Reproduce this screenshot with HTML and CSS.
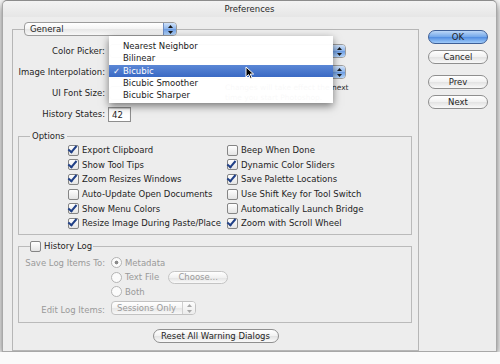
FILE: index.html
```html
<!DOCTYPE html>
<html lang="en">
<head>
    <meta charset="UTF-8">
    <meta name="viewport" content="width=device-width, initial-scale=1.0">
    <title>Preferences</title>
    <link rel="stylesheet" href="styles.css">
</head>
<body>
    <div class="window">
        <div class="titlebar">Preferences</div>
        <div class="main">
            <fieldset class="panel">
                <legend>
                    <span class="popup general">General<span class="stepper"><svg width="5" height="9" viewBox="0 0 5 9"><polygon points="2.5,0 5,3 0,3"/><polygon points="0,6 5,6 2.5,9"/></svg></span></span>
                </legend>

                <div class="prefs">
                    <div class="row">
                        <span class="lbl">Color Picker:</span>
                        <span class="popup wide"><span class="stepper"><svg width="5" height="9" viewBox="0 0 5 9"><polygon points="2.5,0 5,3 0,3"/><polygon points="0,6 5,6 2.5,9"/></svg></span></span>
                    </div>
                    <div class="row">
                        <span class="lbl">Image Interpolation:</span>
                        <span class="popup wide"><span class="stepper"><svg width="5" height="9" viewBox="0 0 5 9"><polygon points="2.5,0 5,3 0,3"/><polygon points="0,6 5,6 2.5,9"/></svg></span></span>
                    </div>
                    <div class="row">
                        <span class="lbl">UI Font Size:</span>
                        <span class="popup small"><span class="stepper"><svg width="5" height="9" viewBox="0 0 5 9"><polygon points="2.5,0 5,3 0,3"/><polygon points="0,6 5,6 2.5,9"/></svg></span></span>
                        <span class="note">Changes will take effect the next<br>time you start Photoshop.</span>
                    </div>
                    <div class="row">
                        <span class="lbl">History States:</span>
                        <span class="field">42</span>
                    </div>
                </div>

                <fieldset class="group">
                    <legend>Options</legend>
                    <div class="opts">
                        <span class="check on">Export Clipboard</span>
                        <span class="check">Beep When Done</span>
                        <span class="check on">Show Tool Tips</span>
                        <span class="check on">Dynamic Color Sliders</span>
                        <span class="check on">Zoom Resizes Windows</span>
                        <span class="check on">Save Palette Locations</span>
                        <span class="check">Auto-Update Open Documents</span>
                        <span class="check">Use Shift Key for Tool Switch</span>
                        <span class="check on">Show Menu Colors</span>
                        <span class="check">Automatically Launch Bridge</span>
                        <span class="check on">Resize Image During Paste/Place</span>
                        <span class="check on">Zoom with Scroll Wheel</span>
                    </div>
                </fieldset>

                <fieldset class="group history">
                    <legend><span class="check">History Log</span></legend>
                    <div class="hist">
                        <span class="lbl">Save Log Items To:</span>
                        <span class="radio on">Metadata</span>
                        <span></span>
                        <span class="radio">Text File<span class="btn choose">Choose...</span></span>
                        <span></span>
                        <span class="radio">Both</span>
                        <span class="lbl last">Edit Log Items:</span>
                        <span class="popup off last">Sessions Only<span class="stepper"><svg width="5" height="9" viewBox="0 0 5 9"><polygon points="2.5,0 5,3 0,3"/><polygon points="0,6 5,6 2.5,9"/></svg></span></span>
                    </div>
                </fieldset>

                <div class="reset">
                    <span class="btn">Reset All Warning Dialogs</span>
                </div>
            </fieldset>

            <div class="side">
                <span class="btn default">OK</span>
                <span class="btn">Cancel</span>
                <span class="btn prev">Prev</span>
                <span class="btn">Next</span>
            </div>
        </div>

        <!-- open Image Interpolation menu -->
        <ul class="menu">
            <li>Nearest Neighbor</li>
            <li>Bilinear</li>
            <li class="picked">Bicubic</li>
            <li>Bicubic Smoother</li>
            <li>Bicubic Sharper</li>
        </ul>
        <svg class="cursor" width="10" height="14" viewBox="0 0 10 14"><path d="M1 1 L1 11 L3.6 8.6 L5.4 12.6 L7 11.9 L5.3 8 L8.6 8 Z" fill="#000" stroke="#fff" stroke-width="1"/></svg>
    </div>
</body>
</html>
```

FILE: styles.css
```css
* {
    box-sizing: border-box;
}

body {
    margin: 0;
    background: #fafafa;
    font-family: 'DejaVu Sans', sans-serif;
    font-size: 8.5px;
    color: #1e1e1e;
}

.window {
    position: relative;
    width: 495px;
    height: 352px;
    margin-left: 2px;
    background: #ededed;
    border: 1px solid #a8a8a8;
    border-top-color: #8c8c8c;
    border-radius: 5px 5px 0 0;
    box-shadow: 0 3px 8px rgba(0, 0, 0, 0.6);
}

.titlebar {
    height: 16px;
    line-height: 16px;
    text-align: center;
    color: #2a2a2a;
    background: linear-gradient(#f3f3f3, #e6e6e6);
    border-radius: 5px 5px 0 0;
}

.main {
    display: flex;
    gap: 9px;
    padding: 5px 0 0 9px;
}

fieldset {
    margin: 0;
    min-width: 0;
}

.panel {
    width: 407px;
    padding: 0 0 7px;
    border: 1px solid #b6b6b6;
}

.panel > legend {
    margin-left: 11px;
    padding: 0;
}

/* popups */
.popup {
    display: flex;
    align-items: center;
    height: 14px;
    padding-left: 5px;
    border: 1px solid #9c9c9c;
    border-radius: 4px;
    background: linear-gradient(#ffffff, #f4f4f4 50%, #e6e6e6 50%, #f8f8f8);
    overflow: hidden;
    white-space: nowrap;
}

.popup.general {
    width: 153px;
}

.popup.wide {
    width: 237px;
    margin-left: 4px;
}

.popup.small {
    width: 70px;
    margin-left: 4px;
}

.stepper {
    display: flex;
    align-items: center;
    justify-content: center;
    width: 13px;
    height: 100%;
    margin-left: auto;
    border-left: 1px solid #6f8cc0;
    background: linear-gradient(#cfe2fa, #8fb6ec 50%, #6a9be2 50%, #b4d5fb);
}

.stepper svg {
    fill: #1a1a1a;
}

.popup.off {
    width: 85px;
    color: #9a9a9a;
    border-color: #c2c2c2;
}

.popup.off .stepper {
    border-left-color: #cfcfcf;
    background: linear-gradient(#fdfdfd, #ececec);
}

.popup.off .stepper svg {
    fill: #a8a8a8;
}

/* preference rows */
.prefs {
    display: flex;
    flex-direction: column;
    gap: 7px;
    padding-top: 8px;
}

.row {
    display: flex;
    align-items: center;
    height: 14px;
}

.lbl {
    width: 92px;
    text-align: right;
    white-space: nowrap;
}

.note {
    margin-left: 46px;
    font-size: 7.5px;
    line-height: 10px;
    color: #333;
    white-space: nowrap;
}

.field {
    width: 23px;
    height: 15px;
    margin-left: 3px;
    padding: 2px 0 0 3px;
    background: #fff;
    border: 1px solid #8e8e8e;
    box-shadow: inset 0 1px 1px rgba(0, 0, 0, 0.2);
}

/* group boxes */
.group {
    margin: 10px 6px 0 5px;
    padding: 2px 0 3px;
    border: 1px solid #bababa;
}

.group legend {
    margin-left: 11px;
    padding: 0 2px;
    line-height: 10px;
}

.history {
    margin-top: 6px;
    padding-bottom: 7px;
}

.history legend {
    padding: 0 1px 0 0;
}

.opts {
    display: grid;
    grid-template-columns: 159px auto;
    grid-auto-rows: 14.6px;
    padding-left: 49px;
}

.check {
    position: relative;
    display: flex;
    align-items: center;
    white-space: nowrap;
}

.check::before {
    content: '';
    width: 9px;
    height: 9px;
    margin-right: 3px;
    border: 1px solid #858585;
    border-radius: 2px;
    background: linear-gradient(#ffffff, #e4e4e4);
    flex: none;
}

.check.on::after {
    content: '';
    position: absolute;
    left: 2px;
    top: 50%;
    width: 3px;
    height: 7px;
    margin-top: -6px;
    border: solid #1f3f86;
    border-width: 0 2px 2px 0;
    transform: rotate(40deg);
}

.hist {
    display: grid;
    grid-template-columns: 86px auto;
    grid-template-rows: 14.5px 14.5px 14.5px 16px;
    column-gap: 6px;
    align-items: center;
    padding-top: 2px;
}

.hist .lbl {
    width: auto;
    color: #9a9a9a;
}

.hist .last {
    align-self: end;
}

.radio {
    display: flex;
    align-items: center;
    color: #9a9a9a;
    white-space: nowrap;
}

.radio::before {
    content: '';
    width: 9px;
    height: 9px;
    margin-right: 3px;
    border: 1px solid #b4b4b4;
    border-radius: 50%;
    background: #fbfbfb;
    flex: none;
}

.radio.on::before {
    background: radial-gradient(circle, #8a8a8a 0 1.6px, #fbfbfb 2.2px);
}

/* buttons */
.btn {
    display: flex;
    align-items: center;
    justify-content: center;
    height: 14px;
    padding: 0 10px;
    border: 1px solid #8f8f8f;
    border-radius: 7px;
    background: linear-gradient(#ffffff, #f1f1f1 50%, #e2e2e2 50%, #f9f9f9);
    color: #1e1e1e;
    white-space: nowrap;
}

.btn.choose {
    width: 60px;
    height: 13px;
    margin-left: 9px;
    color: #9a9a9a;
    border-color: #c4c4c4;
}

.reset {
    display: flex;
    justify-content: center;
    margin-top: 6px;
}

.reset .btn {
    width: 126px;
    padding: 0;
}

.side {
    display: flex;
    flex-direction: column;
    gap: 6px;
    width: 60px;
    padding-top: 8px;
}

.side .btn {
    padding: 0;
}

.btn.default {
    border-color: #3e5f96;
    background: linear-gradient(#bcd7f7, #72a7ea 50%, #4f8be0 50%, #9fcbfa);
}

.btn.prev {
    margin-top: 5px;
}

/* popup menu overlay */
.menu {
    position: absolute;
    left: 106px;
    top: 35px;
    width: 224px;
    margin: 0;
    padding: 4px 0 2px;
    list-style: none;
    background: rgba(255, 255, 255, 0.97);
    box-shadow: 0 3px 8px rgba(0, 0, 0, 0.5);
}

.menu li {
    height: 12.3px;
    line-height: 12.3px;
    padding-left: 14px;
    color: #1a1a1a;
}

.menu li.picked {
    position: relative;
    color: #fff;
    background: linear-gradient(#5b87d6, #3a69c4);
}

.menu li.picked::before {
    content: '\2713';
    position: absolute;
    left: 4px;
}

.cursor {
    position: absolute;
    left: 242px;
    top: 65px;
}
```
